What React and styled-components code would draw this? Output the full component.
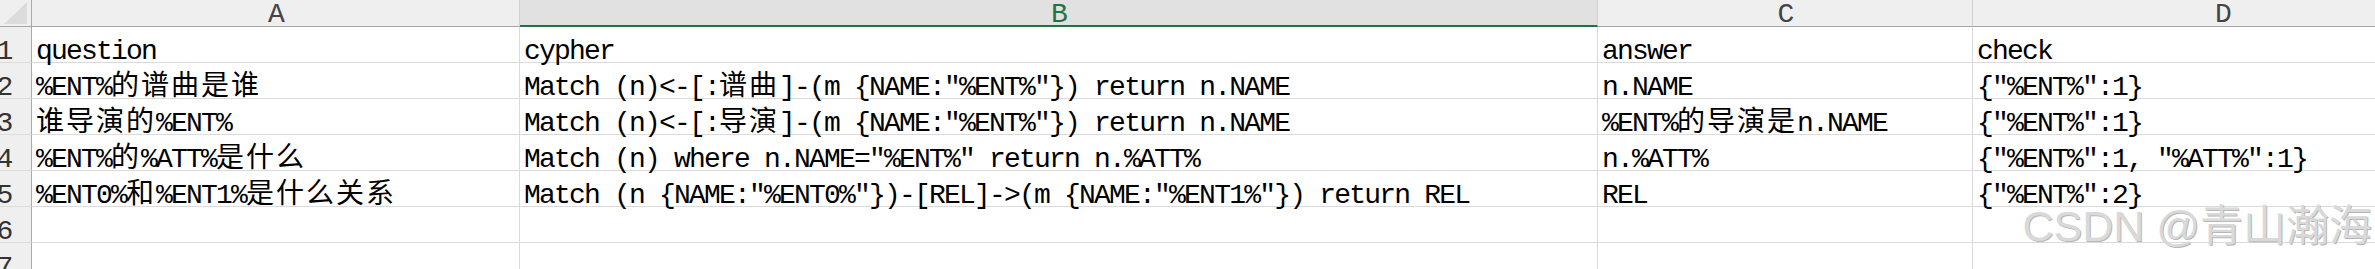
import React from "react";
import styled, { createGlobalStyle } from "styled-components";

const GlobalStyle = createGlobalStyle`
  html, body {
    margin: 0;
    padding: 0;
    background: #ffffff;
    overflow: hidden;
  }
`;

const Viewport = styled.div`
  position: relative;
  width: 2375px;
  height: 269px;
  overflow: hidden;
  background: #ffffff;
`;

const Sheet = styled.div`
  display: grid;
  grid-template-columns: 55px 488px 1078px 375px 500px;
  grid-template-rows: 27px repeat(7, 36px);
  margin-left: -23px;
  font-family: "Liberation Mono", "Noto Sans CJK SC", monospace;
  font-size: 28px;
  letter-spacing: -1.8px;
  color: #000000;
`;

const Corner = styled.div`
  box-sizing: border-box;
  display: flex;
  justify-content: flex-end;
  align-items: flex-end;
  padding: 0 4px 2px 0;
  background: #efefef;
  border-right: 1px solid #ababab;
  border-bottom: 1px solid #a6a6a6;
`;

const ColHeader = styled.div`
  box-sizing: border-box;
  padding-top: 5px;
  line-height: 20px;
  text-align: center;
  color: ${(p) => (p.$active ? "#217346" : "#444444")};
  background: ${(p) => (p.$active ? "#e1e1e1" : "#efefef")};
  border-right: 1px solid #d0d0d0;
  border-bottom: ${(p) => (p.$active ? "2px solid #217346" : "1px solid #a6a6a6")};
`;

const RowHeader = styled.div`
  box-sizing: border-box;
  padding-top: 15px;
  line-height: 20px;
  text-align: center;
  color: #333333;
  background: #efefef;
  border-right: 1px solid #ababab;
  border-bottom: 1px solid #dcdcdc;
`;

const Cell = styled.div`
  box-sizing: border-box;
  padding: 15px 4px 0;
  line-height: 20px;
  white-space: pre;
  border-right: 1px solid #dadada;
  border-bottom: 1px solid #dadada;
`;

// small line-height so the CJK font does not push the baseline down
const Han = styled.span`
  font-family: "Noto Sans CJK SC", sans-serif;
  letter-spacing: 2px;
  line-height: 10px;
`;

const Watermark = styled.div`
  position: absolute;
  top: 205px;
  right: 3px;
  font-family: "Liberation Sans", "Noto Sans CJK SC", sans-serif;
  font-size: 43px;
  line-height: 43px;
  color: #d9d9d9;
  text-shadow: 1px 1px 0 #b8b8b8;
  white-space: nowrap;
  pointer-events: none;
`;

const columns = ["A", "B", "C", "D"];

const rows = [
  ["question", "cypher", "answer", "check"],
  ["%ENT%的谱曲是谁", 'Match (n)<-[:谱曲]-(m {NAME:"%ENT%"}) return n.NAME', "n.NAME", '{"%ENT%":1}'],
  ["谁导演的%ENT%", 'Match (n)<-[:导演]-(m {NAME:"%ENT%"}) return n.NAME', "%ENT%的导演是n.NAME", '{"%ENT%":1}'],
  ["%ENT%的%ATT%是什么", 'Match (n) where n.NAME="%ENT%" return n.%ATT%', "n.%ATT%", '{"%ENT%":1, "%ATT%":1}'],
  ["%ENT0%和%ENT1%是什么关系", 'Match (n {NAME:"%ENT0%"})-[REL]->(m {NAME:"%ENT1%"}) return REL', "REL", '{"%ENT%":2}'],
  ["", "", "", ""],
  ["", "", "", ""],
];

// chinese runs get their own font, latin stays monospaced
const renderText = (text) =>
  text.split(/([\u4e00-\u9fff]+)/).map((part, i) =>
    /[\u4e00-\u9fff]/.test(part) ? <Han key={i}>{part}</Han> : part
  );

export default function App() {
  return (
    <Viewport>
      <GlobalStyle />
      <Sheet>
        <Corner>
          <svg width="23" height="22" viewBox="0 0 23 22">
            <polygon points="23,0 23,22 0,22" fill="#dcdcdc" />
          </svg>
        </Corner>
        {columns.map((col) => (
          <ColHeader key={col} $active={col === "B"}>
            {col}
          </ColHeader>
        ))}
        {rows.map((row, r) => (
          <React.Fragment key={r}>
            <RowHeader>{r + 1}</RowHeader>
            {row.map((value, c) => (
              <Cell key={c}>{renderText(value)}</Cell>
            ))}
          </React.Fragment>
        ))}
      </Sheet>
      <Watermark>CSDN @青山瀚海</Watermark>
    </Viewport>
  );
}
